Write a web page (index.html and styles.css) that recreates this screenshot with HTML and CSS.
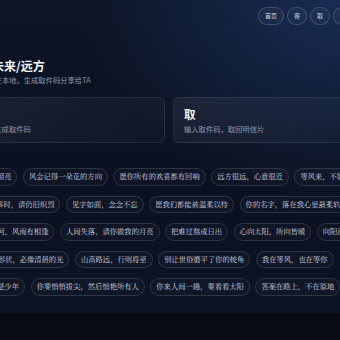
FILE: index.html
```html
<!DOCTYPE html>
<html>
<head>
    <meta charset="UTF-8" />
    <title>未来/远方</title>
    <link rel="stylesheet" href="styles.css">
</head>
<body>
    <div class="page">
        <nav class="topnav">
            <a class="pill">首页</a>
            <a class="pill">寄</a>
            <a class="pill">取</a>
            <a class="pill">关于</a>
        </nav>

        <header class="hero">
            <h1>致未来/远方</h1>
            <p>保存在本地，生成取件码分享给TA</p>
        </header>

        <div class="actions">
            <div class="card">
                <h2>寄</h2>
                <p>并生成取件码</p>
            </div>
            <div class="card">
                <h2>取</h2>
                <p>输入取件码，取回明信片</p>
            </div>
        </div>

        <div class="wall">
            <div class="row row-1">
                <span class="chip">愿你前路有光照亮</span>
                <span class="chip">风会记得一朵花的方向</span>
                <span class="chip">愿你所有的欢喜都有回响</span>
                <span class="chip">远方很远，心意很近</span>
                <span class="chip">等风来，不如追风去</span>
            </div>
            <div class="row row-2">
                <span class="chip">当你回首往事时，请仍旧炽烈</span>
                <span class="chip">见字如面，念念不忘</span>
                <span class="chip">愿我们都能被温柔以待</span>
                <span class="chip">你的名字，落在我心里最柔软的地方</span>
            </div>
            <div class="row row-3">
                <span class="chip">愿你路过山河，风雨有相逢</span>
                <span class="chip">人间失落，请你做我的月亮</span>
                <span class="chip">把难过熬成日出</span>
                <span class="chip">心向太阳，所向皆暖</span>
                <span class="chip">向阳而生，逆风翻盘</span>
            </div>
            <div class="row row-4">
                <span class="chip">无论什么形状，必像清晨的光</span>
                <span class="chip">山高路远，行则将至</span>
                <span class="chip">别让世俗磨平了你的棱角</span>
                <span class="chip">我在等风，也在等你</span>
            </div>
            <div class="row row-5">
                <span class="chip">愿你出走半生，归来仍是少年</span>
                <span class="chip">你要悄悄拔尖，然后惊艳所有人</span>
                <span class="chip">你来人间一趟，要看看太阳</span>
                <span class="chip">答案在路上，不在原地</span>
            </div>
        </div>
    </div>
</body>
</html>
```

FILE: styles.css
```css
:root {
    --text: #f1f5f9;
    --muted: #8d97aa;
    --chip-text: #d3d9e3;
    --line: rgba(148, 163, 184, 0.22);
}

body {
    margin: 0;
    overflow: hidden;
    background: #070b13;
    font-family: 'Noto Sans CJK SC', 'Noto Sans', sans-serif;
    color: var(--text);
}

.page {
    width: 386px;
    margin-left: -24px;
    padding: 7px 0 17px;
    background:
        radial-gradient(ellipse 260px 200px at 95% 0%, rgba(28, 52, 98, 0.75), rgba(28, 52, 98, 0) 100%),
        linear-gradient(180deg, #0d1526, #0b1120 60%, #0c1322);
}

.topnav {
    display: flex;
    justify-content: flex-end;
    gap: 3px;
    padding-right: 3px;
}

.pill {
    display: block;
    padding: 0 6px;
    line-height: 16px;
    font-size: 6px;
    color: #cbd5e1;
    border: 1px solid rgba(148, 163, 184, 0.3);
    border-radius: 9px;
    background: rgba(255, 255, 255, 0.03);
}

.hero {
    margin-top: 33px;
    padding-left: 4px;
}

.hero h1 {
    margin: 0;
    font-size: 12px;
    line-height: 16px;
    font-weight: 700;
}

.hero p {
    margin: 1px 0 0;
    font-size: 7.3px;
    line-height: 10px;
    color: var(--muted);
}

.actions {
    display: grid;
    grid-template-columns: 1fr 1fr;
    gap: 8px;
    margin-top: 12px;
}

.card {
    padding: 9px 10px 8px;
    border: 1px solid rgba(148, 163, 184, 0.14);
    border-radius: 6px;
    background: linear-gradient(135deg, rgba(255, 255, 255, 0.06), rgba(255, 255, 255, 0.02));
}

.card h2 {
    margin: 0;
    font-size: 11.5px;
    line-height: 14px;
    font-weight: 700;
}

.card p {
    margin: 3px 0 0;
    font-size: 7.3px;
    line-height: 10px;
    color: var(--muted);
}

.wall {
    display: flex;
    flex-direction: column;
    gap: 10px;
    margin-top: 25px;
}

.row {
    display: flex;
    gap: 5.5px;
    white-space: nowrap;
}

.row-1 { margin-left: -28.9px; }
.row-2 { margin-left: -22.4px; }
.row-3 { margin-left: -21.1px; }
.row-4 { margin-left: -13.4px; }
.row-5 { margin-left: -57.7px; }

.chip {
    flex: none;
    padding: 0 5px;
    line-height: 15.6px;
    font-size: 7.3px;
    font-family: 'Noto Serif CJK SC', serif;
    color: var(--chip-text);
    border: 1px solid var(--line);
    border-radius: 9px;
    background: rgba(255, 255, 255, 0.02);
}
```
